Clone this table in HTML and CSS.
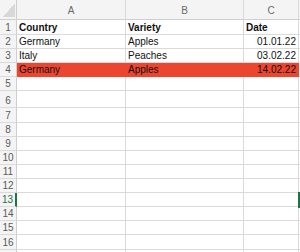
FILE: index.html
```html
<!DOCTYPE html>
<html lang="en">
<head>
<meta charset="utf-8">
<title>Sheet1</title>
<link rel="stylesheet" href="styles.css">
</head>
<body>
<div class="sheet">
  <div class="row head">
    <div class="rh corner"></div>
    <div class="c ca">A</div><div class="c cb">B</div><div class="c cc">C</div><div class="c cd"></div>
  </div>
  <div class="row h15">
    <div class="rh">1</div>
    <div class="c ca bold">Country</div><div class="c cb bold">Variety</div><div class="c cc bold">Date</div><div class="c cd"></div>
  </div>
  <div class="row">
    <div class="rh">2</div>
    <div class="c ca">Germany</div><div class="c cb">Apples</div><div class="c cc num">01.01.22</div><div class="c cd"></div>
  </div>
  <div class="row">
    <div class="rh">3</div>
    <div class="c ca">Italy</div><div class="c cb">Peaches</div><div class="c cc num">03.02.22</div><div class="c cd"></div>
  </div>
  <div class="row filled">
    <div class="rh">4</div>
    <div class="c ca">Germany</div><div class="c cb">Apples</div><div class="c cc num">14.02.22</div><div class="c cd"></div>
  </div>
  <div class="row"><div class="rh">5</div><div class="c ca"></div><div class="c cb"></div><div class="c cc"></div><div class="c cd"></div></div>
  <div class="row h17"><div class="rh">6</div><div class="c ca"></div><div class="c cb"></div><div class="c cc"></div><div class="c cd"></div></div>
  <div class="row h15"><div class="rh">7</div><div class="c ca"></div><div class="c cb"></div><div class="c cc"></div><div class="c cd"></div></div>
  <div class="row"><div class="rh">8</div><div class="c ca"></div><div class="c cb"></div><div class="c cc"></div><div class="c cd"></div></div>
  <div class="row"><div class="rh">9</div><div class="c ca"></div><div class="c cb"></div><div class="c cc"></div><div class="c cd"></div></div>
  <div class="row"><div class="rh">10</div><div class="c ca"></div><div class="c cb"></div><div class="c cc"></div><div class="c cd"></div></div>
  <div class="row"><div class="rh">11</div><div class="c ca"></div><div class="c cb"></div><div class="c cc"></div><div class="c cd"></div></div>
  <div class="row"><div class="rh">12</div><div class="c ca"></div><div class="c cb"></div><div class="c cc"></div><div class="c cd"></div></div>
  <div class="row active"><div class="rh">13</div><div class="c ca"></div><div class="c cb"></div><div class="c cc"></div><div class="c cd selected"></div></div>
  <div class="row"><div class="rh">14</div><div class="c ca"></div><div class="c cb"></div><div class="c cc"></div><div class="c cd"></div></div>
  <div class="row"><div class="rh">15</div><div class="c ca"></div><div class="c cb"></div><div class="c cc"></div><div class="c cd"></div></div>
  <div class="row h15"><div class="rh">16</div><div class="c ca"></div><div class="c cb"></div><div class="c cc"></div><div class="c cd"></div></div>
  <div class="row"><div class="rh"></div><div class="c ca"></div><div class="c cb"></div><div class="c cc"></div><div class="c cd"></div></div>
</div>
</body>
</html>
```
FILE: styles.css
```css
html, body {
  margin: 0;
  padding: 0;
  background: #ffffff;
}

body {
  font-family: "Liberation Sans", Arial, sans-serif;
  font-size: 10px;
  color: #111111;
  overflow: hidden;
}

.sheet {
  width: 300px;
  height: 252px;
  overflow: hidden;
}

.row {
  display: flex;
  height: 14px;
}

.h15 { height: 15px; }
.h17 { height: 17px; }

.c,
.rh {
  box-sizing: border-box;
  height: 100%;
  border-right: 1px solid #dadada;
  border-bottom: 1px solid #dadada;
  display: flex;
  align-items: flex-end;
  padding: 0 2px;
  line-height: 12px;
  white-space: nowrap;
  overflow: hidden;
}

/* row number gutter */
.rh {
  flex: none;
  width: 17px;
  padding: 0;
  justify-content: center;
  background: #f4f4f4;
  color: #5a5a5a;
  border-right-color: #cfcfcf;
}

.ca { flex: none; width: 109px; }
.cb { flex: none; width: 118px; }
.cc { flex: none; width: 55px; }
.cd { flex: 1; }

.bold { font-weight: bold; }
.num { justify-content: flex-end; }

/* column letters */
.head {
  height: 20px;
}

.head .c {
  background: #f4f4f4;
  justify-content: center;
  align-items: center;
  padding-top: 2px;
  color: #6a6a6a;
  border-bottom-color: #cfcfcf;
}

.head .rh {
  border-bottom-color: #cfcfcf;
}

/* select-all corner triangle */
.corner {
  background:
    linear-gradient(to bottom right, transparent 50%, #d8d8d8 50%) right 1px bottom 2px / 12px 14px no-repeat,
    #f4f4f4;
}

/* highlighted record */
.filled .ca,
.filled .cb,
.filled .cc {
  background: #ec4530;
  border-color: #ec4530;
}

/* active row and cell cursor */
.active .rh {
  color: #1f7244;
  border-right: 2px solid #1f7244;
}

.selected {
  position: relative;
  overflow: visible;
}

.selected::before {
  content: "";
  position: absolute;
  left: -1px;
  top: -1px;
  bottom: -2px;
  width: 2px;
  background: #1f7244;
}
```
